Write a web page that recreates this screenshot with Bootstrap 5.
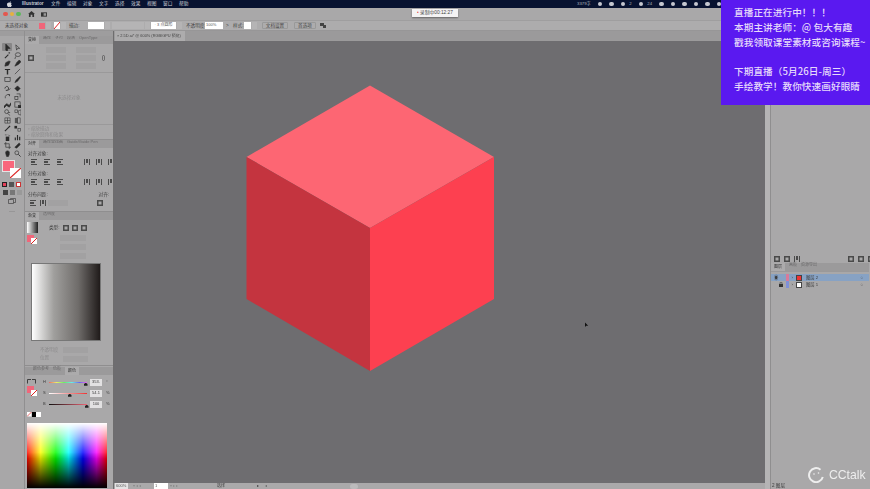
<!doctype html>
<html lang="zh"><head><meta charset="utf-8">
<link href="https://cdn.jsdelivr.net/npm/bootstrap@5.3.0/dist/css/bootstrap.min.css" rel="stylesheet">
<style>
html,body{height:100%;overflow:hidden;margin:0}
body{width:870px;height:489px;background:#a9a8a9;font-family:"Liberation Sans","Noto Sans CJK SC",sans-serif;font-size:4.6px;color:#3c3c3c;line-height:1.2}
.shot{width:870px;height:489px;position:relative;filter:blur(.3px);overflow:hidden;white-space:nowrap}
.menubar{height:8px;background:#071230;color:#c9ccd4;font-size:4.7px}
.menubar .mi{width:16px;flex:none}
.stat{position:absolute;left:577px;top:0;height:8px;gap:7px;font-size:4.3px}
.sg{display:block;width:4.5px;height:4.5px;border-radius:50%;background:#c4c7cf;flex:none}
.titlebar{height:12px;background:#a9a8a9;padding-left:3px;gap:2px}
.dot{width:4.5px;height:4.5px;border-radius:50%}
.ctrlbar{height:11px;background:#adacad;padding-left:5px;color:#444;border-top:1px solid #9f9e9f;border-bottom:1px solid #979697}
.fld{background:#fff;height:6.5px;display:inline-flex;align-items:center;padding:0 1px;font-size:4px;color:#555;flex:none}
.fld.dim{background:#b5b4b5}
.dd{width:5px;height:6.5px;flex:none;background:#b5b4b5;margin-left:1px}
.btnish{border:1px solid #999;border-radius:1px;height:7px;display:inline-flex;align-items:center;justify-content:center;flex:none}
.workarea{height:458px}
.tools{width:25px;background:#a8a7a8;flex:none;border-right:1px solid #908f90}
.band{height:5px;background:#9e9d9e}
.tgrid{display:grid;grid-template-columns:10px 10px;grid-auto-rows:8.2px;justify-content:center;padding-top:7px}
.tgrid span{display:flex;align-items:center;justify-content:center}
.tgrid span.on{background:#878687;border-radius:1px}
.tgrid svg{width:7px;height:7px;fill:#2a2a2a;stroke:#2a2a2a;stroke-width:.7}
.fs{position:relative;height:18px;margin:3px 0 0 3px}
.fs1{display:block;width:11px;height:10px;background:#f8677c;outline:.5px solid #e5e5e5}
.fs2{position:absolute;left:7px;top:7px;width:11px;height:10px}
.mini{width:5px;height:5px;flex:none}
.panels{width:89px;flex:none;background:#a9a8a9;border-right:1px solid #6e6d6e}
.ptabs{height:8px;background:#9b9a9b;color:#6a696a;font-size:4px;gap:4px;flex:none}
.ptabs b{font-weight:400;background:#acabac;height:8px;padding:2px 3px 0;color:#333}
.pn{overflow:hidden;border-bottom:1px solid #8f8e8f}
.p1{height:104px}.p2{height:72px}.p3{height:154px}
.p1grid{display:grid;grid-template-columns:20px 20px;gap:2px 10px}
.fd{height:6px;background:#a2a1a2;display:block}
.rule{height:1px;background:#9a999a}
.faint{color:#8d8c8d}
.lbl{padding-left:3px;line-height:5px;margin-top:6.5px}
.icorow{padding-left:3px;height:6px;margin-top:3px}
.ic{width:6px;height:6px;flex:none;fill:#4a4a4a}
.grad{width:70px;height:78px;margin:0 0 0 6px;background:linear-gradient(90deg,#fff,#a09f9d 32%,#6f6c6a 68%,#201b1a);border:.5px solid #777}
.spec{width:80px;height:65px;margin:6px 0 0 2px;background:linear-gradient(0deg,#000 0,rgba(0,0,0,0) 55%),linear-gradient(180deg,#fff 0,rgba(255,255,255,0) 55%),linear-gradient(90deg,#f00,#ff0 17%,#0f0 36%,#0ff 52%,#00f 70%,#f0f 87%,#f00)}
.sl{height:11px;font-size:4px}
.sl em{font-style:normal;width:6px;flex:none}
.track{position:relative;width:38px;height:1.5px;flex:none}
.track i{position:absolute;top:1px;width:3.5px;height:3px;background:#222;clip-path:polygon(50% 0,100% 40%,100% 100%,0 100%,0 40%)}
.sv{background:#e2e1e2;width:12px;height:6.5px;font-size:4px;text-align:center;margin-left:3px;flex:none;line-height:6.5px}
.canvaswrap{width:651px;flex:none}
.tabrow{height:10px;background:#9b9a9b;flex:none}
.doctab{width:70px;height:10px;background:#adacad;padding-left:2px;font-size:3.9px;color:#444;margin-left:1px}
.canvas{flex:1;background:#6e6d70;position:relative}
.statusbar{height:6px;background:#aaa9aa;flex:none;font-size:4px}
.strip{width:6px;background:#b5b4b5;flex:none;border-right:1px solid #8f8e8f}
.right{width:98px;flex:none;background:#a9a8a9}
.lyr{height:7px;font-size:4.3px;flex:none}
.lyr.sel{background:#87a2c4}
.thumb{width:6px;height:6px;background:#fff;border:.5px solid #444;flex:none}
.promo{position:absolute;right:0;top:0;width:149px;height:105px;background:#5a19f0;color:#e6d9fb;font-family:"Noto Sans CJK SC",sans-serif;font-size:9.6px;line-height:14.8px;padding:5px 0 0 13px;font-weight:500;letter-spacing:.1px}
.rec{position:absolute;left:412px;top:9px;width:46px;height:7.5px;background:#f4f3f4;font-size:4.8px;box-shadow:0 1px 2px rgba(0,0,0,.4);color:#444}
.logo{position:absolute;left:808px;top:467px;gap:5px;color:#eee;font-size:12.2px;font-family:"Liberation Sans",sans-serif;line-height:16px}
</style></head><body><div class="shot">
<svg width="0" height="0" class="position-absolute"><defs>
<symbol id="i1" viewBox="0 0 8 8"><path d="M2 0L7 5H4.2L3.8 8L2 7Z"/></symbol>
<symbol id="i2" viewBox="0 0 8 8"><path d="M2 1L6.5 5H4L3 7Z" fill="none"/></symbol>
<symbol id="i3" viewBox="0 0 8 8"><path d="M1 7L5 3" fill="none" stroke-width="1.2"/><path d="M6 0V2M5 1H7" fill="none" stroke-width=".6"/></symbol>
<symbol id="i4" viewBox="0 0 8 8"><ellipse cx="4.5" cy="3" rx="3" ry="2.2" fill="none"/><path d="M2 5L1 8" fill="none"/></symbol>
<symbol id="i5" viewBox="0 0 8 8"><path d="M1 7L2 3L6 1L7 2L5 6Z"/></symbol>
<symbol id="i6" viewBox="0 0 8 8"><path d="M1 7L3 3L6 0L8 2L5 5Z"/></symbol>
<symbol id="i7" viewBox="0 0 8 8"><path d="M1 1H7V2.4H4.8V7.5H3.2V2.4H1Z" stroke="none"/></symbol>
<symbol id="i8" viewBox="0 0 8 8"><path d="M1 7L7 1" fill="none"/></symbol>
<symbol id="i9" viewBox="0 0 8 8"><rect x="1" y="1.5" width="6" height="5" fill="none"/></symbol>
<symbol id="i10" viewBox="0 0 8 8"><path d="M1 7.5L2.5 4.5L7 0.5L7.5 1L4 6Z"/></symbol>
<symbol id="i11" viewBox="0 0 8 8"><path d="M1 4C2 1 4 1 5 3C6 5 4 7 2 6" fill="none" stroke-width="1"/><path d="M5 6L7.5 4" fill="none"/></symbol>
<symbol id="i12" viewBox="0 0 8 8"><path d="M4 1L7 4L4 7L1 4Z"/></symbol>
<symbol id="i13" viewBox="0 0 8 8"><path d="M1.5 6A3.5 3.5 0 0 1 6.5 2" fill="none"/><path d="M5 1L7 2L6 4Z" stroke="none"/></symbol>
<symbol id="i14" viewBox="0 0 8 8"><rect x="1" y="4" width="3.5" height="3.5" fill="none"/><path d="M3 1H7V5" fill="none"/></symbol>
<symbol id="i15" viewBox="0 0 8 8"><path d="M0 6L3 3L6 5L8 2L8 4L6 7L3 5L0 8Z"/></symbol>
<symbol id="i16" viewBox="0 0 8 8"><rect x="1" y="1" width="6" height="6" fill="none"/><rect x="5" y="5" width="3" height="3"/></symbol>
<symbol id="i17" viewBox="0 0 8 8"><circle cx="3" cy="3" r="2.2" fill="none"/><path d="M4 5L7 7.5M5 4L7 4" fill="none"/></symbol>
<symbol id="i18" viewBox="0 0 8 8"><path d="M1 1H4V4H1ZM5 2L8 1V7L5 6Z" fill="none" stroke-width=".6"/></symbol>
<symbol id="i19" viewBox="0 0 8 8"><path d="M1 1H7V7H1ZM4 1V7M1 4H7" fill="none" stroke-width=".6"/></symbol>
<symbol id="i20" viewBox="0 0 8 8"><rect x="1" y="1" width="3" height="6" stroke="none" fill="#555"/><rect x="4" y="1" width="3" height="6" fill="none" stroke-width=".6"/></symbol>
<symbol id="i21" viewBox="0 0 8 8"><path d="M1 7L5 3L6 2L7 1" fill="none" stroke-width="1.3"/></symbol>
<symbol id="i22" viewBox="0 0 8 8"><rect x="0.5" y="1" width="3" height="3" stroke="none"/><rect x="4.5" y="4" width="3" height="3" fill="none" stroke-width=".6"/></symbol>
<symbol id="i23" viewBox="0 0 8 8"><rect x="2" y="3" width="4" height="5" stroke="none"/><path d="M1 1H3M4 0H5M5 2H7" fill="none" stroke-width=".6"/></symbol>
<symbol id="i24" viewBox="0 0 8 8"><path d="M1.5 7V4M4 7V1M6.5 7V3" fill="none" stroke-width="1.3"/></symbol>
<symbol id="i25" viewBox="0 0 8 8"><path d="M2 0V6H8M0 2H6V8" fill="none"/></symbol>
<symbol id="i26" viewBox="0 0 8 8"><path d="M1 6L6 1L7 3L3 7Z"/></symbol>
<symbol id="i27" viewBox="0 0 8 8"><path d="M2 4V2H3V1H5V2H6V5L5 7.5H3Z"/></symbol>
<symbol id="i28" viewBox="0 0 8 8"><circle cx="3.2" cy="3.2" r="2.2" fill="none"/><path d="M5 5L7.5 7.5" fill="none" stroke-width="1"/></symbol>
<symbol id="aL" viewBox="0 0 6 6"><path d="M0 0H6V1H0ZM0 2H4V4H0ZM0 5H6V6H0Z"/></symbol>
<symbol id="aV" viewBox="0 0 6 6"><path d="M0 0H1V6H0ZM2 0H4V4H2ZM5 0H6V6H5Z"/></symbol>
<symbol id="bx" viewBox="0 0 6 6"><path d="M0 0H6V6H0ZM1.5 1.5V4.5H4.5V1.5Z"/></symbol>
</defs></svg>
<div class="menubar d-flex align-items-center"><svg width="5" height="6" viewBox="0 0 5 6" style="margin:0 10px 0 7px;flex:none"><path d="M2.5 1.4C3 .6 3.6.4 3.8.2C3.8 1 3.3 1.5 2.5 1.4ZM2.5 1.7C3 1.5 4 1.3 4.6 2.2C3.8 2.8 4 3.9 4.9 4.2C4.6 5 4 6 3.4 6C3 6 2.8 5.7 2.4 5.7C2 5.7 1.8 6 1.4 6C.8 6 0 4.6 0 3.4C0 2 1.5 1.2 2.5 1.7Z" fill="#d5d7dd"/></svg><b class="fw-semibold" style="width:29px;flex:none">Illustrator</b><span class="mi">文件</span><span class="mi">编辑</span><span class="mi">对象</span><span class="mi">文字</span><span class="mi">选择</span><span class="mi">效果</span><span class="mi">视图</span><span class="mi">窗口</span><span class="mi">帮助</span></div>
<div class="stat d-flex align-items-center" style="color:#aeb2bc"><span>3379字</span><span class="sg"></span><span class="sg"></span><span class="d-flex align-items-center gap-1"><span class="sg"></span>2</span><span class="d-flex align-items-center gap-1"><span class="sg"></span>24</span><span class="sg"></span><span class="sg"></span><span class="sg"></span><span class="sg"></span><span class="sg"></span><span class="sg"></span></div>
<div class="titlebar d-flex align-items-center"><span class="dot" style="background:#e4574f"></span><span class="dot" style="background:#e5b13e"></span><span class="dot" style="background:#5cb85c"></span>
<svg width="7" height="6" viewBox="0 0 8 7" style="margin-left:5px"><path d="M4 0L8 3.5H7V7H5V4.5H3V7H1V3.5H0Z" fill="#333"/></svg>
<svg width="6" height="5" viewBox="0 0 7 5" style="margin-left:4px"><rect width="7" height="5" fill="#333"/><rect x="3" y="1" width="3" height="3" fill="#999"/></svg></div>
<div class="ctrlbar d-flex align-items-center"><span style="width:34px;flex:none">未选择对象</span><span style="width:6px;height:6px;background:#f0667a;flex:none"></span><span class="dd"></span>
<svg width="6" height="7" viewBox="0 0 6 7" style="margin-left:3px;flex:none"><rect width="6" height="7" fill="#fff"/><path d="M0 7L6 0" stroke="#d22"/></svg><span class="dd"></span>
<span style="margin-left:3px;width:19px;flex:none">描边:</span><span class="fld" style="width:16px"></span><span class="dd"></span><span class="fld dim" style="width:32px;margin-left:2px"></span><span class="dd"></span>
<span class="fld justify-content-center" style="width:25px;margin-left:1px">· 3 点圆形</span><span class="dd"></span><span style="margin-left:4px;width:19px;flex:none">不透明度:</span><span class="fld" style="width:18px">100%</span><span style="margin-left:3px;width:7px;flex:none">&gt;</span><span style="width:11px;flex:none">样式:</span><span class="fld" style="width:7px"></span><span class="dd"></span>
<span class="btnish" style="width:26px;margin-left:5px">文档设置</span><span class="btnish" style="width:22px;margin-left:6px">首选项</span><svg width="6" height="6" viewBox="0 0 6 6" style="margin-left:4px;flex:none"><path d="M0 0H4V2H6V5H3V3H0Z" fill="#444"/></svg></div>
<div class="workarea d-flex">
 <div class="tools"><div class="band"></div><div class="tgrid">
 <span class="on"><svg><use href="#i1"/></svg></span><span><svg><use href="#i2"/></svg></span><span><svg><use href="#i3"/></svg></span><span><svg><use href="#i4"/></svg></span><span><svg><use href="#i5"/></svg></span><span><svg><use href="#i6"/></svg></span><span><svg><use href="#i7"/></svg></span><span><svg><use href="#i8"/></svg></span><span><svg><use href="#i9"/></svg></span><span><svg><use href="#i10"/></svg></span><span><svg><use href="#i11"/></svg></span><span><svg><use href="#i12"/></svg></span><span><svg><use href="#i13"/></svg></span><span><svg><use href="#i14"/></svg></span><span><svg><use href="#i15"/></svg></span><span><svg><use href="#i16"/></svg></span><span><svg><use href="#i17"/></svg></span><span><svg><use href="#i18"/></svg></span><span><svg><use href="#i19"/></svg></span><span><svg><use href="#i20"/></svg></span><span><svg><use href="#i21"/></svg></span><span><svg><use href="#i22"/></svg></span><span><svg><use href="#i23"/></svg></span><span><svg><use href="#i24"/></svg></span><span><svg><use href="#i25"/></svg></span><span><svg><use href="#i26"/></svg></span><span><svg><use href="#i27"/></svg></span><span><svg><use href="#i28"/></svg></span></div>
  <div class="fs"><span class="fs1"></span><svg class="fs2" viewBox="0 0 11 10"><rect width="11" height="10" fill="#fff"/><path d="M0 10L11 0" stroke="#d22" stroke-width="1.2"/></svg></div>
  <div class="d-flex" style="gap:2px;margin:3px 0 0 2px"><span class="mini" style="background:#e6405a;border:1px solid #222"></span><span class="mini" style="background:#555"></span><span class="mini" style="background:#fff;border:1px solid #c33"></span></div>
  <div class="d-flex" style="gap:2px;margin:3px 0 0 3px"><span class="mini" style="background:#444"></span><span class="mini" style="background:#777"></span><span class="mini" style="background:#999"></span></div>
  <svg width="8" height="6" viewBox="0 0 8 6" class="d-block" style="margin:3px 0 0 8px"><path d="M.5 1.5H5.500V5.500H.5ZM2.500 1.500V.5H7.500V4.500H5.500" fill="none" stroke="#444" stroke-width=".7"/></svg>
  <div class="text-center" style="margin-top:5px;font-size:6px;line-height:4px">···</div>
 </div>
 <div class="panels">
  <div class="band"></div>
  <div class="pn p1"><div class="ptabs d-flex"><b>变换</b><span>路径</span><span>字符</span><span>段落</span><span>OpenType</span></div>
   <div class="d-flex" style="padding-top:3px"><svg class="ic align-self-center" style="margin:0 12px 0 3px"><use href="#bx"/></svg><div class="p1grid"><i class="fd"></i><i class="fd"></i><i class="fd"></i><i class="fd"></i><i class="fd"></i><i class="fd"></i></div><svg width="3" height="6" viewBox="0 0 3 6" class="align-self-center" style="margin-left:6px;flex:none"><path d="M.5 1.500A1 1 0 0 1 2.500 1.500V4.500A1 1 0 0 1 .5 4.500Z" fill="none" stroke="#444" stroke-width=".6"/></svg></div>
   <div class="rule" style="margin-top:3px"></div>
   <div class="text-center faint" style="margin-top:22px">未选择对象</div>
   <div class="rule" style="margin-top:23px"></div>
   <div class="faint" style="padding:1px 0 0 3px;line-height:6px">▫ 缩放描边<br>▫ 缩放圆角和效果</div></div>
  <div class="pn p2"><div class="ptabs d-flex"><b>对齐</b><span>路径查找器</span><span>Guide/Guide Pen</span></div>
   <div class="lbl" style="margin-top:2.5px">对齐对象:</div>
   <div class="d-flex icorow"><svg class="ic" style="margin-left:3px"><use href="#aL"/></svg><svg class="ic" style="margin-left:7px"><use href="#aL"/></svg><svg class="ic" style="margin-left:7px"><use href="#aL"/></svg><svg class="ic" style="margin-left:21px"><use href="#aV"/></svg><svg class="ic" style="margin-left:6px"><use href="#aV"/></svg><svg class="ic" style="margin-left:6px"><use href="#aV"/></svg></div>
   <div class="lbl">分布对象:</div>
   <div class="d-flex icorow"><svg class="ic" style="margin-left:3px"><use href="#aL"/></svg><svg class="ic" style="margin-left:7px"><use href="#aL"/></svg><svg class="ic" style="margin-left:7px"><use href="#aL"/></svg><svg class="ic" style="margin-left:21px"><use href="#aV"/></svg><svg class="ic" style="margin-left:6px"><use href="#aV"/></svg><svg class="ic" style="margin-left:6px"><use href="#aV"/></svg></div>
   <div class="lbl d-flex"><span>分布间距:</span><span class="ms-auto" style="margin-right:4px">对齐:</span></div>
   <div class="d-flex icorow align-items-center"><svg class="ic" style="margin-left:2px"><use href="#aL"/></svg><svg class="ic" style="margin-left:4px"><use href="#aV"/></svg><i class="fd" style="width:20px;margin-left:2px"></i><svg class="ic" style="margin-left:29px"><use href="#bx"/></svg></div></div>
  <div class="pn p3"><div class="ptabs d-flex"><b>渐变</b><span>透明度</span></div>
   <div class="d-flex" style="padding:2px 0 0 2px"><span style="width:11px;height:11px;background:linear-gradient(90deg,#fff,#222);flex:none"></span><span style="margin:3px 0 0 11px;width:14px;flex:none">类型:</span><svg class="ic" style="margin:3px 3px 0 0"><use href="#bx"/></svg><svg class="ic" style="margin:3px 3px 0 0"><use href="#bx"/></svg><svg class="ic" style="margin:3px 3px 0 0"><use href="#bx"/></svg></div>
   <div class="d-flex" style="padding:2px 0 0 2px;height:28px"><span style="width:7px;height:7px;background:#f0667a;flex:none"></span><svg width="6" height="6" viewBox="0 0 6 6" style="margin:3px 0 0 -3px;flex:none"><rect width="6" height="6" fill="#fff"/><path d="M0 6L6 0" stroke="#d22"/></svg><div class="flex-fill" style="padding:0 0 0 23px"><i class="fd" style="width:26px;margin-bottom:3px"></i><i class="fd" style="width:26px;margin-bottom:3px"></i><i class="fd" style="width:26px"></i></div></div>
   <div style="height:2px"></div>
   <div class="grad"></div>
   <div class="d-flex faint" style="padding:6px 0 0 15px;gap:2px;line-height:6px"><div>不透明度<br><span style="line-height:10px">位置</span></div><div class="flex-fill" style="padding-left:3px"><i class="fd" style="width:25px;margin-bottom:3px"></i><i class="fd" style="width:25px"></i></div></div></div>
  <div class="ptabs d-flex" style="margin-top:1px"><span class="ms-2">颜色参考</span><span>色板</span><b>颜色</b></div>
  <div class="d-flex" style="padding-top:2px">
   <div style="width:18px;flex:none;padding:2px 0 0 2px"><svg width="9" height="5" viewBox="0 0 9 5" class="d-block"><path d="M.5 4.500V.5H4M5 .5H8.500V4.500" fill="none" stroke="#333" stroke-width=".9"/></svg><div class="d-flex" style="margin-top:2px"><span style="width:7px;height:7px;background:#f0667a;flex:none"></span><svg width="6" height="6" viewBox="0 0 6 6" style="margin:4px 0 0 -3px;flex:none"><rect width="6" height="6" fill="#fff"/><path d="M0 6L6 0" stroke="#d22"/></svg></div></div>
   <div class="flex-fill">
    <div class="d-flex sl align-items-center"><em>H</em><span class="track" style="background:linear-gradient(90deg,#e66,#ee6,#6e6,#6ee,#66e,#e6e)"><i style="left:35px"></i></span><span class="sv">353.</span><span class="ms-1">°</span></div>
    <div class="d-flex sl align-items-center"><em>S</em><span class="track" style="background:linear-gradient(90deg,#fff,#e33)"><i style="left:19px"></i></span><span class="sv">54.1</span><span class="ms-1">%</span></div>
    <div class="d-flex sl align-items-center"><em>B</em><span class="track" style="background:linear-gradient(90deg,#111,#e67)"><i style="left:36px"></i></span><span class="sv">100</span><span class="ms-1">%</span></div></div></div>
  <div class="d-flex" style="padding:2px 0 0 2px;height:7px"><svg width="4.5" height="4.5" viewBox="0 0 4 4"><rect width="4" height="4" fill="#fff"/><path d="M0 4L4 0" stroke="#d22" stroke-width=".6"/></svg><span style="width:4.5px;height:4.5px;background:#000"></span><span style="width:4.5px;height:4.5px;background:#fff"></span></div>
  <div class="spec"></div>
 </div>
 <div class="canvaswrap d-flex flex-column">
  <div class="tabrow"><div class="doctab d-flex align-items-center">× 2.5D.ai* @ 600% (RGB/GPU 预览)</div></div>
  <div class="canvas"><svg class="position-absolute" style="left:0;top:0" width="651" height="442" viewBox="114 41 651 442"><path d="M370 85.500L494 157L370 228L246.500 157Z" fill="#fd6673"/><path d="M246.500 157L370 228V371L246.500 299Z" fill="#c4343f"/><path d="M370 228L494 157V299L370 371Z" fill="#fd4050"/><path d="M585 322.500l0 4.500 1.200-1.200 2 0Z" fill="#111"/></svg></div>
  <div class="statusbar d-flex align-items-center"><span class="fld" style="height:6px;width:13px;margin-left:1px;background:#e4e3e4">600%</span><span style="margin-left:5px;width:21px;color:#888;flex:none">▾ ◂ ◂</span><span class="fld" style="height:6px;width:14px">1</span><span style="margin-left:2px;width:47px;color:#888;flex:none">▾ ▸ ▸</span><span style="width:40px;flex:none">选择</span><span style="width:8px;flex:none">▸</span><span style="width:85px;flex:none;color:#666">◂</span><span style="width:8px;height:5px;border-radius:3px;background:#bcbbbc;flex:none"></span></div>
 </div>
 <div class="strip"></div>
 <div class="right d-flex flex-column"><div style="height:223px;flex:none"></div>
  <div class="d-flex align-items-center" style="height:9px;padding-left:3px;gap:4px;flex:none"><svg class="ic"><use href="#bx"/></svg><svg class="ic"><use href="#bx"/></svg><svg class="ic"><use href="#aV"/></svg><svg class="ic" style="margin-left:44px"><use href="#bx"/></svg><svg class="ic"><use href="#bx"/></svg><svg class="ic"><use href="#bx"/></svg></div>
  <div class="ptabs d-flex"><b>图层</b><span>画板</span><span>资源导出</span></div>
  <div class="rule" style="margin-bottom:2px"></div>
  <div class="lyr sel d-flex align-items-center"><span style="width:15px;flex:none;padding-left:3px">◉</span><span style="width:2.5px;height:7px;background:#d77a9a;flex:none;margin-right:3px"></span><span style="width:4.5px;flex:none">›</span><span class="thumb" style="background:#e33"></span><span class="ms-1">图层 2</span><span class="ms-auto" style="margin-right:6px">○</span></div>
  <div class="lyr d-flex align-items-center"><svg width="4" height="5" viewBox="0 0 4 5" style="margin:0 3px 0 8px;flex:none"><path d="M0 2H4V5H0Z" fill="#333"/><path d="M1 2V1A1 1 0 0 1 3 1V2" fill="none" stroke="#333" stroke-width=".6"/></svg><span style="width:2.5px;height:7px;background:#7f90d8;flex:none;margin-right:3px"></span><span style="width:4.5px;flex:none">›</span><span class="thumb"></span><span class="ms-1">图层 1</span><span class="ms-auto" style="margin-right:6px">○</span></div>
  <div class="flex-fill"></div>
  <div style="height:6px;padding-left:1px;flex:none">2 图层</div></div>
</div>
<div class="promo">直播正在进行中！！！<br>本期主讲老师：@ 包大有趣<br>戳我领取课堂素材或咨询课程~<br><br>下期直播（5月26日-周三）<br>手绘教学！教你快速画好眼睛</div>
<div class="rec d-flex align-items-center justify-content-center"><span style="color:#d22;font-size:3px;margin-right:1px">●</span>录制中00:12:27</div>
<div class="logo d-flex align-items-center"><svg width="16" height="16" viewBox="0 0 16 16" style="flex:none"><path d="M12.500 2.700A7 7 0 1 0 14.800 10" fill="none" stroke="#eee" stroke-width="2"/><circle cx="6" cy="7" r=".8" fill="#eee"/><circle cx="10.500" cy="6" r=".8" fill="#eee"/></svg><span>CCtalk</span></div>
</div>
<script src="https://cdn.jsdelivr.net/npm/bootstrap@5.3.0/dist/js/bootstrap.bundle.min.js"></script>
</body></html>
